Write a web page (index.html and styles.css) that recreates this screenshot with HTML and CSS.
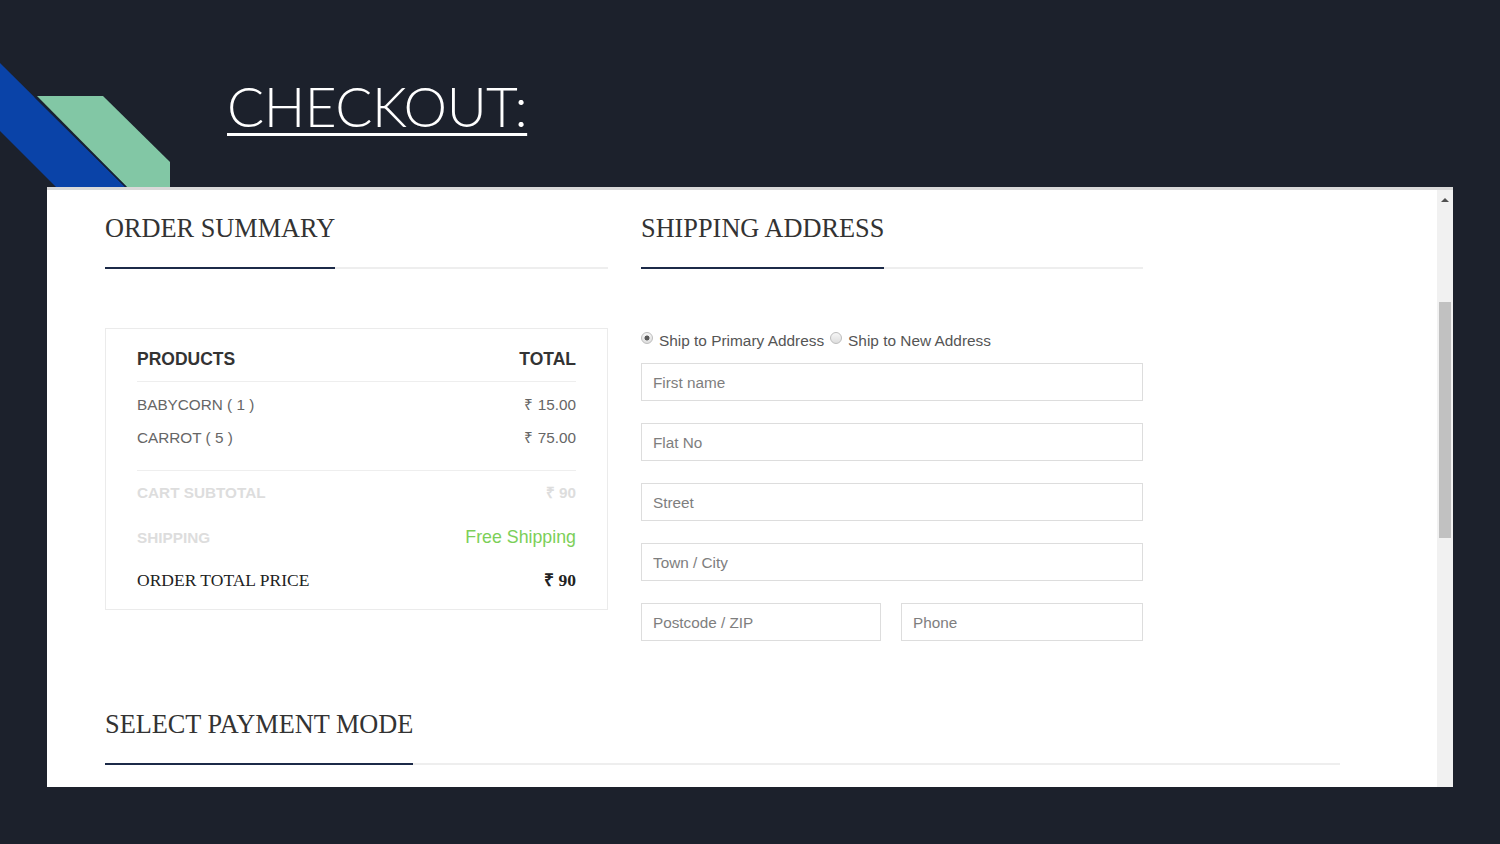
FILE: index.html
```html
<!DOCTYPE html>
<html lang="en">
<head>
<meta charset="utf-8">
<title>Checkout</title>
<link rel="stylesheet" href="styles.css">
</head>
<body>
<header class="slide-header">
  <svg class="deco" width="170" height="187" viewBox="0 0 170 187" aria-hidden="true">
    <polygon points="0,63 125,187 56,187 0,131" fill="#0a43a8"/>
    <polygon points="37,96 103,96 170,162 170,187 127,187" fill="#82c7a5"/>
    <line x1="35" y1="97" x2="126" y2="187" stroke="#13203a" stroke-width="1.2"/>
  </svg>
  <h1 class="title">CHECKOUT:</h1>
</header>

<main class="window">
  <div class="page">
    <div class="cols">
      <section class="col">
        <h2 class="sec-title"><span>ORDER SUMMARY</span></h2>
        <div class="summary">
          <div class="sum-head"><span>PRODUCTS</span><span>TOTAL</span></div>
          <div class="sum-items">
            <div class="sum-row"><span>BABYCORN ( 1 )</span><span>₹ 15.00</span></div>
            <div class="sum-row"><span>CARROT ( 5 )</span><span>₹ 75.00</span></div>
          </div>
          <div class="sum-row sum-sub"><span>CART SUBTOTAL</span><span>₹ 90</span></div>
          <div class="sum-row sum-sub"><span>SHIPPING</span><span class="free">Free Shipping</span></div>
          <div class="sum-row sum-total"><span>ORDER TOTAL PRICE</span><strong>₹ 90</strong></div>
        </div>
      </section>

      <section class="col">
        <h2 class="sec-title"><span>SHIPPING ADDRESS</span></h2>
        <form class="ship-form">
          <div class="radios">
            <label class="radio"><input type="radio" name="ship" checked>Ship to Primary Address</label>
            <label class="radio second"><input type="radio" name="ship">Ship to New Address</label>
          </div>
          <input class="field" type="text" placeholder="First name">
          <input class="field" type="text" placeholder="Flat No">
          <input class="field" type="text" placeholder="Street">
          <input class="field" type="text" placeholder="Town / City">
          <div class="field-row">
            <input class="field zip" type="text" placeholder="Postcode / ZIP">
            <input class="field" type="text" placeholder="Phone">
          </div>
        </form>
      </section>
    </div>

    <section class="payment">
      <h2 class="sec-title"><span>SELECT PAYMENT MODE</span></h2>
    </section>
  </div>
  <div class="scrollbar">
    <span class="arrow"></span>
    <span class="thumb"></span>
  </div>
</main>
</body>
</html>
```

FILE: styles.css
```css
html, body {
  margin: 0;
  padding: 0;
}

body {
  background: #1c212c;
  width: 1500px;
  height: 844px;
  overflow: hidden;
  font-family: "Liberation Sans", Arial, sans-serif;
}

.slide-header {
  display: flex;
  align-items: flex-start;
  height: 187px;
}

.deco {
  display: block;
  flex: none;
}

.title {
  margin: 73px 0 0 57px;
  font-family: Lato, "Open Sans", sans-serif;
  font-weight: 300;
  font-size: 55px;
  line-height: 66px;
  color: #ffffff;
  letter-spacing: -0.5px;
  text-decoration: underline;
  text-decoration-thickness: 3px;
  text-underline-offset: 6px;
}

.window {
  margin-left: 47px;
  width: 1406px;
  height: 600px;
  box-sizing: border-box;
  background: #ffffff;
  border-top: 3px solid #d9d9d9;
  display: flex;
}

.page {
  flex: 1;
  padding: 24px 0 0 58px;
  overflow: hidden;
}

.cols {
  display: flex;
  gap: 33px;
  align-items: flex-start;
}

.col:first-child { width: 503px; }
.col:last-child { width: 502px; }

.sec-title {
  margin: 0;
  display: flex;
  font-family: "Liberation Serif", "Times New Roman", serif;
  font-weight: normal;
  font-size: 26.3px;
  line-height: 30px;
  color: #333333;
  border-bottom: 2px solid #eeeeee;
}

.sec-title span {
  padding-bottom: 23px;
  border-bottom: 2px solid #1c2a48;
  margin-bottom: -2px;
}

/* Order summary */
.summary {
  margin-top: 59px;
  border: 1px solid #ebebeb;
  padding: 18px 31px 9px;
}

.sum-head {
  display: flex;
  justify-content: space-between;
  font-weight: bold;
  font-size: 17.5px;
  line-height: 24px;
  color: #333333;
  padding-bottom: 10px;
  border-bottom: 1px solid #eeeeee;
}

.sum-items {
  padding: 6px 0 16px;
  border-bottom: 1px solid #eeeeee;
}

.sum-row {
  display: flex;
  justify-content: space-between;
  align-items: baseline;
  font-size: 15.3px;
  line-height: 33px;
  color: #666666;
}

.sum-sub {
  line-height: 44px;
  font-weight: bold;
  color: #dddddd;
}

.free {
  font-weight: normal;
  font-size: 17.8px;
  color: #7ccf58;
}

.sum-total {
  font-family: "Liberation Serif", "Times New Roman", serif;
  font-size: 17.5px;
  line-height: 40px;
  color: #222222;
}

.sum-total strong {
  font-weight: bold;
}

/* Shipping form */
.ship-form {
  margin: 59px 0 0;
  padding-top: 3px;
}

.radios {
  display: flex;
  font-size: 15.4px;
  line-height: 20px;
  color: #555555;
  margin-bottom: 12px;
}

.radio {
  display: block;
}

.radio.second {
  margin-left: 6px;
}

.radio input {
  appearance: none;
  -webkit-appearance: none;
  width: 12px;
  height: 12px;
  margin: 0 6px 2px 0;
  vertical-align: baseline;
  border-radius: 50%;
  border: 1px solid #bdbdbd;
  box-sizing: border-box;
  background: linear-gradient(#f6f6f6, #dedede);
}

.radio input:checked {
  background: radial-gradient(circle, #5a5a5a 0 2.2px, transparent 2.8px), linear-gradient(#f6f6f6, #dedede);
}

.field {
  display: block;
  width: 100%;
  height: 38px;
  box-sizing: border-box;
  margin: 0 0 22px;
  padding: 1px 11px 0;
  border: 1px solid #dddddd;
  border-radius: 0;
  font-family: "Liberation Sans", Arial, sans-serif;
  font-size: 15.3px;
  color: #555555;
  background: #ffffff;
  outline: none;
}

.field::placeholder {
  color: #7e7e7e;
}

.field-row {
  display: flex;
  gap: 20px;
}

.field-row .field {
  flex: 1;
  min-width: 0;
  margin-bottom: 0;
}

.field-row .zip {
  flex: none;
  width: 240px;
}

/* Payment */
.payment {
  width: 1235px;
  margin-top: 69px;
}

/* Scrollbar */
.scrollbar {
  width: 16px;
  flex: none;
  background: #f1f1f1;
  display: flex;
  flex-direction: column;
  align-items: center;
}

.arrow {
  margin-top: 8px;
  width: 0;
  height: 0;
  border-left: 4px solid transparent;
  border-right: 4px solid transparent;
  border-bottom: 4px solid #505050;
}

.thumb {
  margin-top: 100px;
  width: 12px;
  height: 236px;
  background: #c1c1c1;
}
```
